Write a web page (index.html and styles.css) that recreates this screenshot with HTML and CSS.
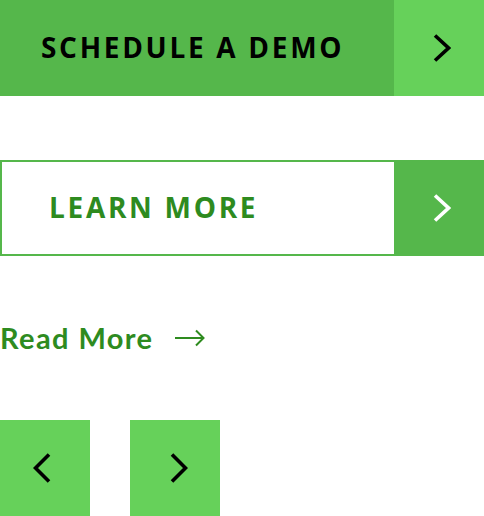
FILE: index.html
```html
<!DOCTYPE html>
<html>
<head>
<meta charset="utf-8">
<link rel="stylesheet" href="styles.css">
</head>
<body>
<div class="page">
  <a class="btn btn-solid" href="#">
    <span class="btn-label">SCHEDULE A DEMO</span>
    <span class="btn-icon">
      <svg width="18" height="28" viewBox="0 0 18 28"><path d="M2 1.5 L15.5 14 L2 26.5" fill="none" stroke="#000" stroke-width="3.6"/></svg>
    </span>
  </a>
  <a class="btn btn-outline" href="#">
    <span class="btn-label">LEARN MORE</span>
    <span class="btn-icon">
      <svg width="18" height="28" viewBox="0 0 18 28"><path d="M2 1.5 L15.5 14 L2 26.5" fill="none" stroke="#fff" stroke-width="3.6"/></svg>
    </span>
  </a>
  <a class="read-more" href="#">
    <span>Read More</span>
    <svg class="read-arrow" width="32" height="20" viewBox="0 0 32 20"><path d="M1 10 H29 M22 2.5 L29.5 10 L22 17.5" fill="none" stroke="#2e8b1f" stroke-width="2"/></svg>
  </a>
  <div class="nav">
    <button class="nav-btn nav-prev" type="button">
      <svg width="18" height="30" viewBox="0 0 18 30"><path d="M16 1.5 L2.5 15 L16 28.5" fill="none" stroke="#000" stroke-width="3.6"/></svg>
    </button>
    <button class="nav-btn nav-next" type="button">
      <svg width="18" height="30" viewBox="0 0 18 30"><path d="M2 1.5 L15.5 15 L2 28.5" fill="none" stroke="#000" stroke-width="3.6"/></svg>
    </button>
  </div>
</div>
</body>
</html>
```
FILE: styles.css
```css
html, body {
  margin: 0;
  padding: 0;
  background: #fff;
}
.page {
  display: flex;
  flex-direction: column;
  width: 484px;
}
.btn {
  display: flex;
  height: 96px;
  text-decoration: none;
  box-sizing: border-box;
}
.btn-label {
  flex: 0 0 394px;
  box-sizing: border-box;
  display: flex;
  align-items: center;
  padding-bottom: 2px;
  font-family: "Open Sans", sans-serif;
  font-weight: 700;
  font-size: 28px;
  letter-spacing: 2.7px;
}
.btn-icon {
  flex: 1;
  display: flex;
  align-items: center;
  justify-content: center;
  padding-left: 6px;
}
.btn-solid .btn-label {
  background: #55b74b;
  color: #000;
  padding-left: 41px;
}
.btn-solid .btn-icon {
  background: #66d15a;
}
.btn-outline {
  margin-top: 64px;
}
.btn-outline .btn-label {
  border: 2px solid #55b74b;
  border-right: none;
  color: #2e8b1f;
  padding-left: 47px;
}
.btn-outline .btn-icon {
  background: #55b74b;
}
.read-more {
  margin-top: 66px;
  display: flex;
  align-items: center;
  height: 30px;
  text-decoration: none;
  color: #2e8b1f;
  font-family: "Lato", sans-serif;
  font-weight: 700;
  font-size: 29px;
  letter-spacing: 1.4px;
}
.read-arrow {
  margin-left: 21px;
  margin-top: 2px;
}
.nav {
  margin-top: 68px;
  display: flex;
  gap: 40px;
}
.nav-btn {
  width: 90px;
  height: 96px;
  border: none;
  padding: 0;
  background: #66d15a;
  display: flex;
  align-items: center;
  justify-content: center;
}
.nav-prev {
  padding-right: 7px;
}
.nav-next {
  padding-left: 7px;
}
```
